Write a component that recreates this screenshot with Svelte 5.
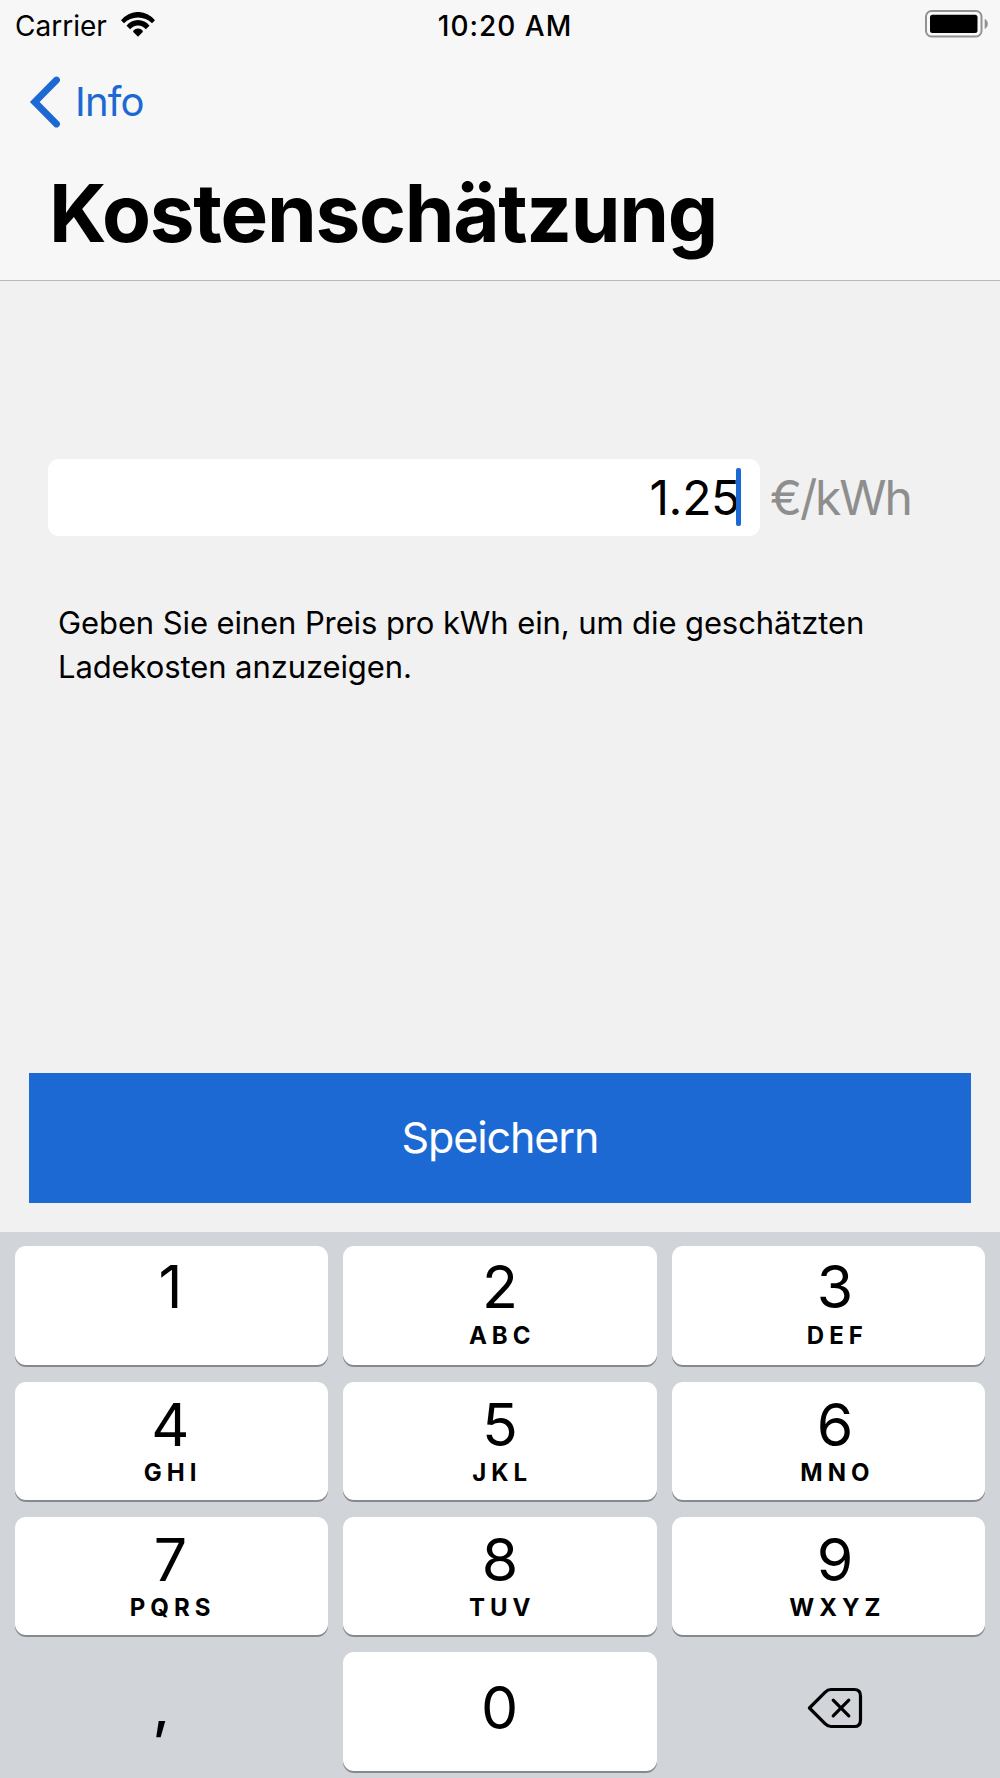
<!--
Component: App.svelte
Description: Screen for entering the electricity price per kWh, used for the charging cost estimate.
The price is typed on the number pad at the bottom of the screen.
-->
<script>
  const keys = [
    { digit: '1', letters: '' },
    { digit: '2', letters: 'ABC' },
    { digit: '3', letters: 'DEF' },
    { digit: '4', letters: 'GHI' },
    { digit: '5', letters: 'JKL' },
    { digit: '6', letters: 'MNO' },
    { digit: '7', letters: 'PQRS' },
    { digit: '8', letters: 'TUV' },
    { digit: '9', letters: 'WXYZ' },
  ];

  let price = $state('1.25');
  let savedPrice = $state('');

  function press(digit) {
    price += digit;
  }

  // Only one decimal separator is allowed
  function pressComma() {
    if (!price.includes('.')) price += '.';
  }

  function removeLast() {
    price = price.slice(0, -1);
  }

  function save() {
    savedPrice = price;
  }
</script>

<div class="screen">
  <header class="header">
    <div class="status">
      <div class="status__left">
        <span class="carrier">Carrier</span>
        <svg class="wifi" width="34" height="25" viewBox="0 0 34 25">
          <path d="M0 8.3a21.5 21.5 0 0 1 34 0l-3 3a19.600 19.600 0 0 0-28 0z" />
          <path d="M5.5 13.8a14.3 14.3 0 0 1 23 0l-3.7 3.5a9.800 9.800 0 0 0-15.600 0z" />
          <path d="M12 19.8a5.500 5.500 0 0 1 10 0l-5 4.900z" />
        </svg>
      </div>
      <span class="time">10:20 AM</span>
      <svg class="battery" width="64" height="28" viewBox="0 0 64 28">
        <rect x="1" y="1" width="55.5" height="25.5" rx="5.5" fill="#f9f9f9" stroke="#929292" stroke-width="2" />
        <rect x="5" y="4.7" width="47.5" height="18.2" rx="2.5" fill="#000" />
        <path d="M59.7 8.7c4.2 2 4.2 8.2 0 10.2z" fill="#929292" />
      </svg>
    </div>

    <button class="back">
      <svg width="32" height="54" viewBox="0 0 32 54">
        <path d="M27.500 5 5.700 27l21.800 22" fill="none" stroke="#1d69d4" stroke-width="6.800" stroke-linecap="round" />
      </svg>
      <span>Info</span>
    </button>

    <h1>Kostenschätzung</h1>
  </header>

  <main class="content">
    <div class="price">
      <div class="field">
        <span class="value">{price}<i class="caret"></i></span>
      </div>
      <span class="unit">€/kWh</span>
    </div>
    <p class="hint">
      Geben Sie einen Preis pro kWh ein, um die geschätzten<br />Ladekosten anzuzeigen.
    </p>
    <button class="save" onclick={save}>Speichern</button>
  </main>

  <div class="keyboard">
    {#each keys as key}
      <button class="key" onclick={() => press(key.digit)}>
        <span class="digit">{key.digit}</span>
        <span class="letters">{key.letters}</span>
      </button>
    {/each}
    <button class="key key--plain comma" onclick={pressComma}>,</button>
    <button class="key key--zero" onclick={() => press('0')}>
      <span class="digit">0</span>
    </button>
    <button class="key key--plain" onclick={removeLast} aria-label="Löschen">
      <svg width="56" height="42" viewBox="0 0 56 42">
        <g fill="none" stroke="#000" stroke-width="3.200" stroke-linecap="round" stroke-linejoin="round">
          <path d="M2.400 21 18 5.300Q20.700 2.500 24 2.500h23.200q6.300 0 6.300 6.300v24.400q0 6.300-6.300 6.300H24q-3.300 0-6-2.800z" />
          <path d="m26.200 13.200 15.600 15.600M41.800 13.200 26.200 28.800" />
        </g>
      </svg>
    </button>
  </div>
</div>

<style>
  :global(body) {
    background: #f1f1f1;
  }

  .screen {
    display: flex;
    flex-direction: column;
    width: 1000px;
    height: 1778px;
    overflow: hidden;
    background: #f1f1f1;
    color: #000;
    font-family: Inter, "Liberation Sans", sans-serif;
  }

  button {
    padding: 0;
    border: none;
    background: none;
    font-family: inherit;
    color: inherit;
    cursor: pointer;
  }

  .header {
    box-sizing: border-box;
    height: 281px;
    border-bottom: 1px solid #b8b8b8;
    background: #f7f7f7;
  }

  .status {
    display: grid;
    grid-template-columns: 1fr auto 1fr;
    align-items: center;
    height: 50px;
    padding: 0 11px 0 15px;
  }

  .status__left {
    display: flex;
    align-items: center;
    gap: 14px;
  }

  .wifi {
    margin-bottom: 2px;
  }

  .carrier {
    padding-top: 1px;
    font-size: 28px;
  }

  .time {
    padding: 1px 0 0 6px;
    font-size: 28px;
    font-weight: 500;
    letter-spacing: 1px;
  }

  .battery {
    justify-self: end;
    margin-bottom: 2px;
  }

  .back {
    display: flex;
    align-items: center;
    gap: 14px;
    height: 54px;
    margin: 25px 0 0 29px;
    color: #1d69d4;
    font-size: 40px;
    letter-spacing: -0.8px;
  }

  .back span {
    padding-bottom: 2px;
  }

  h1 {
    margin: 36px 0 0 49px;
    font-size: 80px;
    font-weight: 700;
    letter-spacing: -1.3px;
    line-height: 96px;
  }

  .content {
    display: flex;
    flex: 1;
    flex-direction: column;
    padding: 178px 29px 29px;
  }

  .price {
    display: flex;
    align-items: center;
    gap: 10px;
    margin-left: 19px;
  }

  .field {
    display: flex;
    box-sizing: border-box;
    align-items: center;
    justify-content: flex-end;
    width: 712px;
    height: 77px;
    padding-right: 20px;
    border-radius: 11px;
    background: #fff;
  }

  .value {
    position: relative;
    font-size: 48px;
    letter-spacing: -0.3px;
  }

  .caret {
    position: absolute;
    top: 0;
    right: -1px;
    width: 5px;
    height: 58px;
    border-radius: 2px;
    background: #1d69d4;
  }

  .unit {
    color: #8e8e8e;
    font-size: 48px;
    letter-spacing: -2.1px;
  }

  .hint {
    margin: 65px 0 0 29px;
    font-size: 31px;
    letter-spacing: -0.1px;
    line-height: 43.5px;
    white-space: nowrap;
  }

  .save {
    height: 130px;
    margin-top: auto;
    padding-bottom: 2px;
    background: #1d69d4;
    color: #fff;
    font-size: 43px;
    letter-spacing: -1.1px;
  }

  .keyboard {
    display: grid;
    box-sizing: border-box;
    grid-template-columns: repeat(3, 1fr);
    grid-auto-rows: 118.3px;
    gap: 17px 15px;
    height: 546px;
    padding: 14.4px 14.6px 0;
    background: #d1d4d9;
  }

  .key {
    display: flex;
    flex-direction: column;
    align-items: center;
    padding-top: 12.5px;
    border-radius: 11px;
    background: #fff;
    box-shadow: 0 2px 0 #86898d;
  }

  .key:nth-child(-n + 3) {
    padding-top: 10px;
  }

  .key:nth-child(-n + 3) .letters {
    padding-top: 1px;
  }

  .key:nth-child(3n) {
    padding-left: 13px;
  }

  .key:nth-child(3n + 1) {
    padding-right: 2px;
  }

  .key--zero {
    justify-content: center;
    padding: 0 1px 7px 0;
  }

  .key--plain {
    justify-content: center;
    padding-top: 0;
    padding-bottom: 6px;
    background: none;
    box-shadow: none;
  }

  .digit {
    font-size: 59px;
    line-height: 62px;
  }

  .letters {
    padding-left: 4.5px;
    font-size: 24px;
    font-weight: 700;
    letter-spacing: 5px;
    line-height: 33px;
  }

  .key.comma {
    padding-right: 20px;
    padding-bottom: 9px;
    font-size: 57px;
    font-weight: 500;
  }
</style>
